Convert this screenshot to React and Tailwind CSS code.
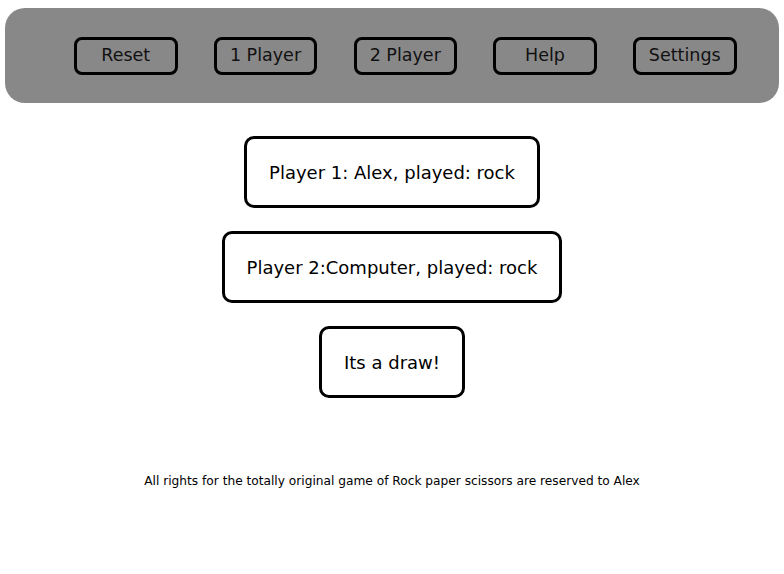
export default function App() {
  const menu = ["Reset", "1 Player", "2 Player", "Help", "Settings"];

  return (
    <div className="min-h-[574px] bg-white text-black font-['DejaVu_Sans',Verdana,sans-serif]">
      {/* Top menu */}
      <div className="pt-[8px] pl-[5px] pr-[5px]">
        <nav className="h-[95px] rounded-[20px] bg-[#888888] flex items-center pl-[69px] gap-[36.25px]">
          {menu.map((m) => (
            <button
              key={m}
              className="w-[103.5px] h-[38px] border-[3px] border-black rounded-[8px] text-[17.5px] leading-none text-[#111]"
            >
              {m}
            </button>
          ))}
        </nav>
      </div>

      {/* Results */}
      <div className="flex flex-col items-center gap-[23px] mt-[33px]">
        <div className="border-[3px] border-black rounded-[10px] px-[22px] h-[72px] flex items-center text-[18px]">
          Player 1: Alex, played: rock
        </div>
        <div className="border-[3px] border-black rounded-[10px] px-[22px] h-[72px] flex items-center text-[18px]">
          Player 2:Computer, played: rock
        </div>
        <div className="border-[3px] border-black rounded-[10px] px-[22px] h-[72px] flex items-center text-[18px]">
          Its a draw!
        </div>
      </div>

      <p className="text-center text-[12.2px] mt-[74px]">
        All rights for the totally original game of Rock paper scissors are reserved to Alex
      </p>
    </div>
  );
}
